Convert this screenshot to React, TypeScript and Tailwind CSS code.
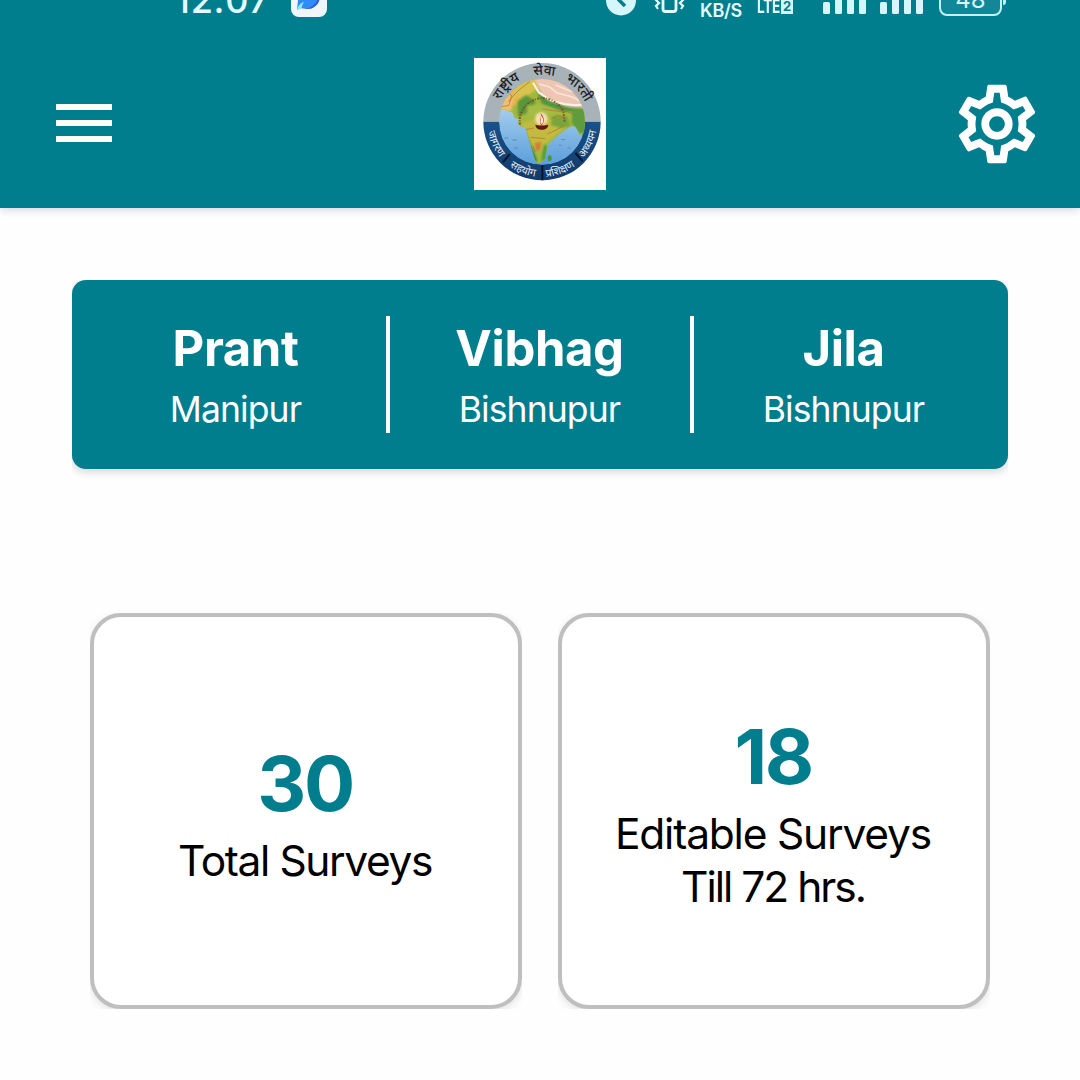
import React from "react";
import { MdOutlineSettings } from "react-icons/md";

function SignalBars() {
  return (
    <svg width="44" height="30" viewBox="0 0 44 30" fill="#d5f6fb">
      <rect x="0" y="17" width="7" height="12" rx="1.5" />
      <rect x="12" y="12" width="7" height="17" rx="1.5" />
      <rect x="24" y="7" width="7" height="22" rx="1.5" />
      <rect x="36" y="2" width="7" height="27" rx="1.5" />
    </svg>
  );
}

function StatusBar() {
  return (
    <div className="-mt-10 flex h-20 items-center pl-[175px] pr-[74px] text-[#e6fbff]">
      <span className="w-[92px] whitespace-nowrap text-[36px] leading-none font-medium tracking-[0.7px]">12:07</span>
      <svg className="ml-6" width="36" height="36" viewBox="0 0 36 36">
        <rect width="36" height="35" rx="8" fill="#f1f6fd" />
        <path d="M7 18V6h22v6c0 9-5 15-13 15-3 0-5-1-7-1l-3 2z" fill="#2f8bf5" />
        <path d="M14 27c8-1 13-7 15-16v3c0 8-6 13-13 13z" fill="#3457dd" />
        <path d="M6 28c1-4 3-7 7-8-2 3-2 5-3 7z" fill="#8fe6fb" />
      </svg>
      <div className="ml-auto flex items-center">
        <svg width="30" height="32" viewBox="0 0 30 32">
          <circle cx="15" cy="16.500" r="15" fill="#d5f6fb" />
          <path d="M16 8l-3 8 6 6" fill="none" stroke="#007e8e" strokeWidth="3.5" />
        </svg>
        <svg className="ml-[17px]" width="33" height="28" viewBox="0 0 33 28" fill="none" stroke="#e6fbff" strokeWidth="2.8">
          <rect x="10" y="2" width="13" height="23.500" rx="2.5" />
          <path d="M4 8l2 3-3 3 3 3-3 3 2 3M29 8l-2 3 3 3-3 3 3 3-2 3" strokeWidth="2.200" />
        </svg>
        <div className="ml-[12px] flex w-[46px] flex-col items-center pt-[4px] text-[18px] leading-[19px] font-semibold whitespace-nowrap">
          <span className="tracking-[0.8px] leading-[17px]">0.00</span>
          <span className="tracking-[-0.3px] leading-[23px]">KB/S</span>
        </div>
        <div className="ml-[13px] flex w-[38px] items-center pt-[13px]">
          <span className="origin-left scale-x-[0.72] text-[19px] leading-none font-bold w-[24px] tracking-[-0.5px]">LTE</span>
          <span className="flex h-[14px] w-[12px] items-center justify-center bg-[#d5f6fb] text-[13px] leading-none font-bold text-[#007e8e]">2</span>
        </div>
        <div className="ml-[28px] flex gap-[13px]">
          <SignalBars />
          <SignalBars />
        </div>
        <div className="ml-[15px] flex items-center">
          <div className="flex h-[31px] w-[63px] items-center justify-center rounded-[8px] border-2 border-[#c4f1f6] bg-[#128797] text-[24px] leading-none text-[#d5f6fb]">48</div>
          <div className="ml-[1px] h-[10px] w-[3px] rounded-r bg-[#c4f1f6]" />
        </div>
      </div>
    </div>
  );
}

function Emblem() {
  return (
    <svg
      className="h-[132px] w-[132px] bg-white"
      viewBox="30 30 396 396"
      fontFamily="'Noto Sans Devanagari', 'Noto Sans', 'FreeSans', sans-serif"
    >
      <defs>
        <clipPath id="globe">
          <circle cx="234" cy="222" r="129" />
        </clipPath>
        <linearGradient id="sea" x1="0" y1="0" x2="0" y2="1">
          <stop offset="0.3" stopColor="#a9d0ee" />
          <stop offset="1" stopColor="#5b9edb" />
        </linearGradient>
        <linearGradient id="ring" x1="0" y1="0" x2="0" y2="1">
          <stop offset="0" stopColor="#17528a" />
          <stop offset="1" stopColor="#123a6b" />
        </linearGradient>
        <filter id="soft">
          <feGaussianBlur stdDeviation="3.5" />
        </filter>
        <path id="land" d="M90 182L124 186L146 194L152 210L166 214L160 224L172 238L184 236L190 258L198 286L208 320L217 345L226 346L242 336L247 316L250 292L266 276L288 258L306 244L322 234L334 236L342 250L346 262L356 258L380 262V70H90z" />
        <clipPath id="landClip">
          <use href="#land" />
        </clipPath>
        <path id="topArc" d="M92 222a142 142 0 0 1 284 0" />
        <path id="bottomArc" d="M69 222a165 165 0 0 0 330 0" />
      </defs>
      <path d="M58 221a176 176 0 0 1 352 0z" fill="#a7b3b8" />
      <path d="M58 221a176 176 0 0 0 352 0z" fill="url(#ring)" />
      <path d="M137 318l-20 25M235 348v49M334 315l22 25" stroke="#081524" strokeWidth="6" />
      <g clipPath="url(#globe)">
        <circle cx="234" cy="222" r="129" fill="url(#sea)" />
        <use href="#land" fill="#a3b83e" />
        <g clipPath="url(#landClip)">
          <g filter="url(#soft)">
            <path d="M95 100h115l-20 40-35 30-50 20z" fill="#eab04f" />
            <path d="M100 150l50-10-8 50-40-4z" fill="#f0c070" />
            <path d="M165 90h50l15 25-40 28-50 10z" fill="#d8c34d" />
            <path d="M210 85l160 10v84l-50-2-50-16-40-26z" fill="#efc6b4" />
            <path d="M218 132l34 26 55 18 55 5-2 14-65-6-60-21z" fill="#4c9440" />
            <path d="M160 160l26-20 30 22-28 34-26 10z" fill="#57993a" />
            <path d="M190 172l50 0 40 16-30 14-60 4z" fill="#a5bd45" />
            <path d="M172 226l52-16 68 8 24 16-34 20-34 30-20 30-26-24z" fill="#c2bb40" />
            <path d="M182 240l12 34 26 64-12 8-33-90z" fill="#278844" />
            <path d="M238 290l12 0-4 44-14 6z" fill="#4fa03e" />
            <path d="M265 205l45 0 10 30-30 6-30-10z" fill="#79a63a" />
            <path d="M325 180l40 0 4 80-24-6-22-30z" fill="#5f9c3c" />
            <path d="M212 285l20-4-3 25-12 4z" fill="#cf7a34" />
          </g>
          <path d="M207 104l18 30 36 23 39 11 36 4 30-3" fill="none" stroke="#fdf3ec" strokeWidth="6" strokeLinejoin="round" />
          <path d="M225 108l30 8 25 19 40 10 30 15M275 111l35 15 30 7" fill="none" stroke="#f8e3d8" strokeWidth="5" />
          <path d="M109 176l25-3 9-25 25-25 30-22M128 130l16 14-10 18M236 182l30 6 46 3 20 10M178 246l32-6M250 258l30-14 20-12M200 268l44 4M206 292l8 20M262 212l18-10 24 8" fill="none" stroke="#b8673b" strokeWidth="2" />
        </g>
        <path d="M168 230c-4-22 4-44 20-60 24-22 52-24 74-14 16 8 28 18 36 34l4 32" fill="none" stroke="#8f3a20" strokeWidth="6" strokeDasharray="6 4 3 4" opacity="0.8" />
        <path d="M121 270h12M145 276h14M150 300h12M291 275h12M285 292h8M311 300h8" stroke="#4f7b9b" strokeWidth="2" />
        <ellipse cx="257" cy="331" rx="6" ry="9" fill="#4a9444" />
        <circle cx="232" cy="212" r="19" fill="#f6dfae" filter="url(#soft)" />
        <path d="M214 230c7 3 31 3 39 0-1 10-8 15-20 15s-18-5-19-15z" fill="#6b1711" />
        <path d="M232 231c-10-12 2-17-2-35 9 8 14 25 4 35z" fill="#d93a21" />
        <path d="M231 227c-4-8 2-10 0-25 7 9 8 17 4 25z" fill="#fff8e9" />
      </g>
      <g fill="#1c1c22" fontSize="41" fontWeight="500" textAnchor="middle">
        <text><textPath href="#topArc" startOffset="25%">राष्ट्रीय</textPath></text>
        <text><textPath href="#topArc" startOffset="51.500%">सेवा</textPath></text>
        <text><textPath href="#topArc" startOffset="76%">भारती</textPath></text>
      </g>
      <g fill="#e4eef7" fontSize="32" textAnchor="middle">
        <text><textPath href="#bottomArc" startOffset="14%">जागरण</textPath></text>
        <text><textPath href="#bottomArc" startOffset="38%">सहयोग</textPath></text>
        <text><textPath href="#bottomArc" startOffset="61.500%">प्रशिक्षण</textPath></text>
        <text><textPath href="#bottomArc" startOffset="86%">अध्ययन</textPath></text>
      </g>
    </svg>
  );
}

function Header() {
  return (
    <header className="flex h-[208px] flex-col bg-[#007e8e] shadow-[0_2px_8px_rgba(30,40,90,0.18)]">
      <StatusBar />
      <div className="grid h-[168px] grid-cols-3 items-center pr-9 pl-14">
        <button className="mb-[2px] flex w-14 flex-col gap-[10px]" aria-label="Menu">
          <span className="h-[6px] bg-white" />
          <span className="h-[6px] bg-white" />
          <span className="h-[6px] bg-white" />
        </button>
        <div className="-ml-5 flex justify-center">
          <Emblem />
        </div>
        <button className="justify-self-end text-white" aria-label="Settings">
          <MdOutlineSettings size={94} />
        </button>
      </div>
    </header>
  );
}

const regions = [
  { label: "Prant", value: "Manipur" },
  { label: "Vibhag", value: "Bishnupur" },
  { label: "Jila", value: "Bishnupur" },
];

function RegionCard() {
  return (
    <section className="mx-[72px] mt-[72px] flex h-[188.500px] justify-center rounded-[14px] bg-[#007e8e] py-9 text-white shadow-[0_3px_9px_rgba(30,30,60,0.18)] [clip-path:inset(0_0_-12px_0)]">
      {regions.map((r, i) => (
        <React.Fragment key={r.label}>
          {i > 0 && <div className="w-1 bg-white" />}
          <div className="flex w-[300px] flex-col items-center pr-px">
            <span className="mt-px text-[49px] leading-[64px] font-bold tracking-[-0.4px]">{r.label}</span>
            <span className="mt-[6px] text-[35.5px] leading-[46px] tracking-[-0.9px]">{r.value}</span>
          </div>
        </React.Fragment>
      ))}
    </section>
  );
}

interface StatCardProps {
  value: string;
  lines: { text: string; style: string }[];
}

function StatCard({ value, lines }: StatCardProps) {
  return (
    <div className="flex h-[396px] flex-col items-center justify-center rounded-[31px] border-4 border-[#bfbfbf] bg-white pr-[2px] text-center shadow-[0_3px_9px_rgba(30,30,30,0.12)] [clip-path:inset(0)]">
      <span className="text-[76px] leading-[94px] font-bold tracking-[-2.5px] text-[#007e8e]">{value}</span>
      <div className="mt-[4px] text-[42.500px] leading-[53px] text-black">
        {lines.map((line) => (
          <p key={line.text} className={`whitespace-nowrap ${line.style}`}>{line.text}</p>
        ))}
      </div>
    </div>
  );
}

export default function App() {
  return (
    <div className="flex h-[1080px] w-[1080px] flex-col overflow-hidden bg-[#fefefe] font-['Inter','Liberation_Sans',sans-serif]">
      <Header />
      <RegionCard />
      <main className="mx-[90px] mt-[144.500px] grid grid-cols-2 gap-9">
        <StatCard value="30" lines={[{ text: "Total Surveys", style: "tracking-[-1.4px]" }]} />
        <StatCard
          value="18"
          lines={[
            { text: "Editable Surveys", style: "tracking-[-1.2px]" },
            { text: "Till 72 hrs.", style: "tracking-[-2px]" },
          ]}
        />
      </main>
    </div>
  );
}
